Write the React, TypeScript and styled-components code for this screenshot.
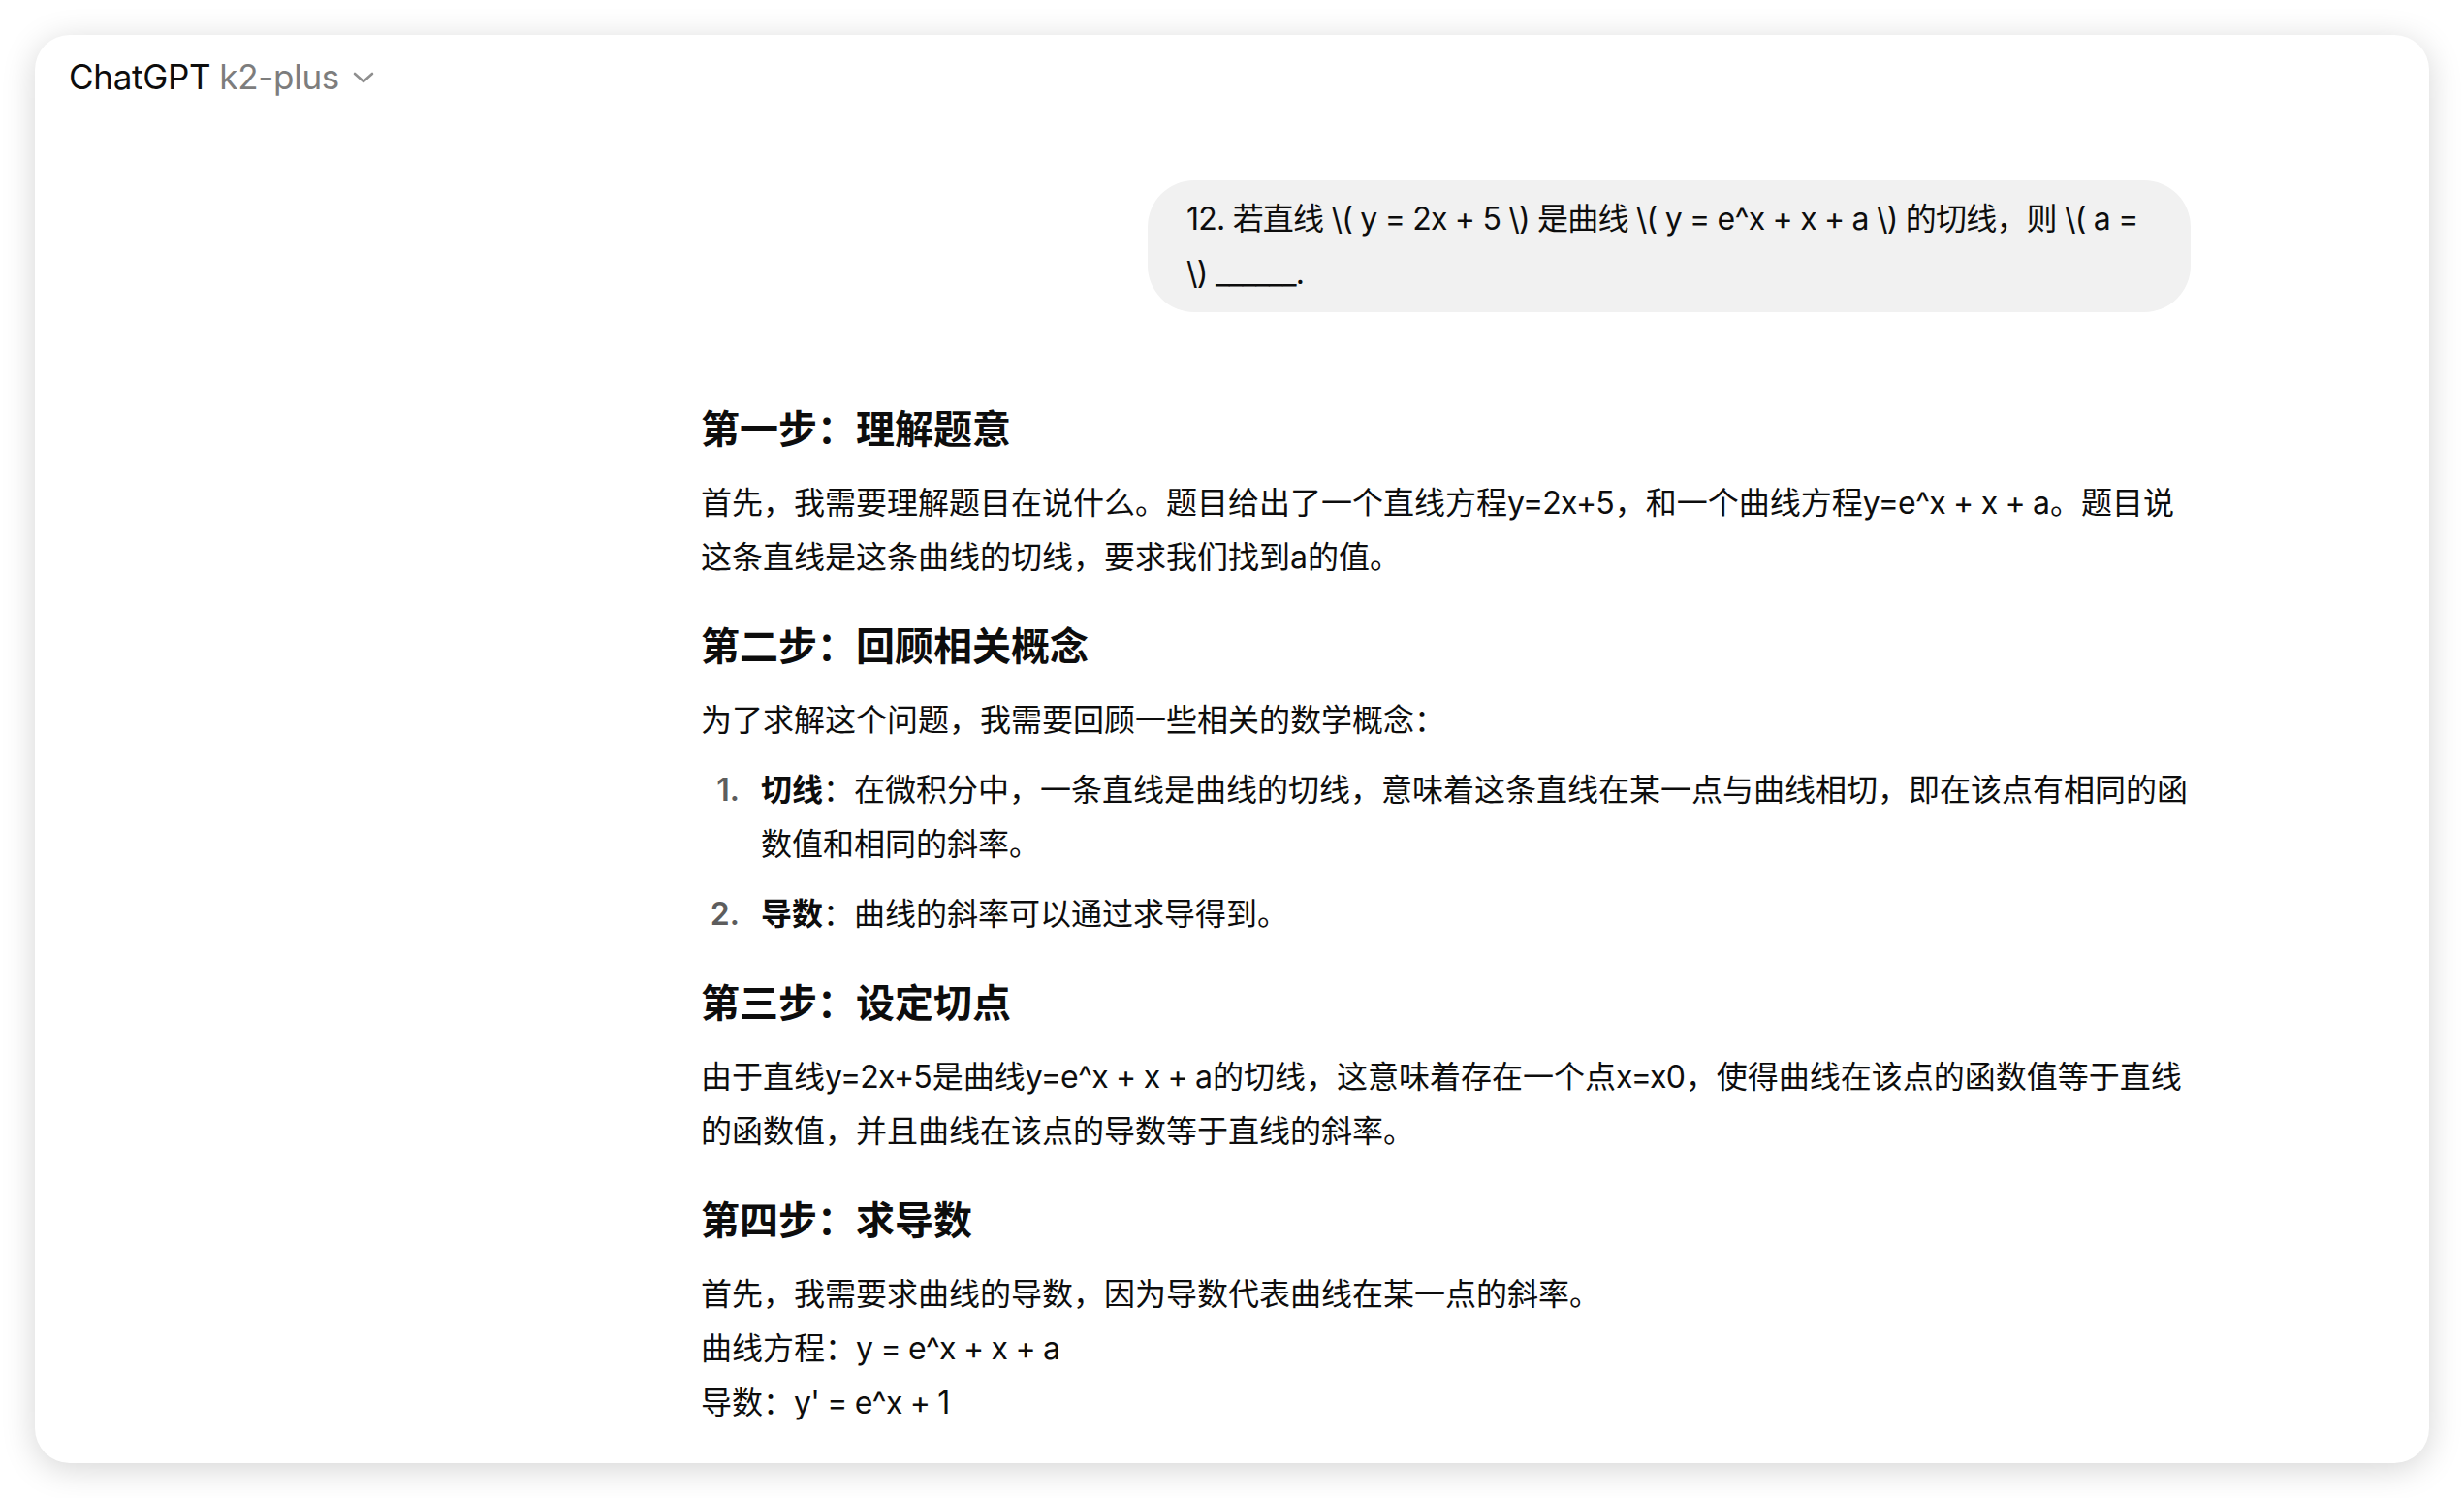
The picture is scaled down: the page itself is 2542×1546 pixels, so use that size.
import React from 'react';
import styled, { createGlobalStyle } from 'styled-components';

const GlobalStyle = createGlobalStyle`
  html, body {
    margin: 0;
    padding: 0;
    background: #ffffff;
  }
  body {
    font-family: "Inter", "Noto Sans CJK SC", sans-serif;
    color: #0d0d0d;
  }
`;

const Window = styled.div`
  margin: 36px;
  height: 1473px;
  border-radius: 36px;
  background: #ffffff;
  box-shadow: 0 6px 34px rgba(0, 0, 0, 0.17);
  overflow: hidden;
  display: flex;
  flex-direction: column;
`;

const Header = styled.header`
  height: 86px;
  padding-left: 35px;
  display: flex;
  align-items: center;
  font-size: 35px;
  line-height: 1;
  letter-spacing: -0.3px;
`;

const Brand = styled.span`
  color: #0d0d0d;
`;

const Model = styled.span`
  color: #7d7d7d;
  margin-left: 9px;
`;

const Chevron = styled.svg`
  width: 24px;
  height: 14px;
  margin-left: 13px;
  margin-top: 2px;
`;

const Thread = styled.main`
  padding: 64px 246px 0 687px;
  display: flex;
  flex-direction: column;
`;

const UserRow = styled.div`
  display: flex;
  justify-content: flex-end;
`;

const Bubble = styled.div`
  max-width: 70%;
  box-sizing: border-box;
  background: #f1f1f1;
  border-radius: 48px;
  padding: 12px 40px;
  font-size: 32px;
  line-height: 56px;
  letter-spacing: -0.8px;
`;

const Answer = styled.article`
  margin-top: 89px;
  font-size: 32px;
  line-height: 56px;
`;

const Heading = styled.h3`
  font-size: 40px;
  line-height: 64px;
  font-weight: 700;
  margin: 32px 0 16px;

  &:first-child {
    margin-top: 0;
  }
`;

const Para = styled.p`
  margin: 0;
`;

/* latin runs (formulas) are set a touch tighter, like the system UI font */
const Expr = styled.span`
  letter-spacing: -0.8px;
  margin-right: 0.8px;
`;

const List = styled.ol`
  list-style: none;
  margin: 16px 0 0;
  padding: 0;
`;

const Item = styled.li`
  display: flex;

  & + & {
    margin-top: 16px;
  }
`;

const Marker = styled.span`
  flex: 0 0 62px;
  box-sizing: border-box;
  padding-right: 22px;
  text-align: right;
  font-weight: 600;
  color: #5d5d5d;
`;

const ItemText = styled.div`
  flex: 1;
  min-width: 0;
`;

const Term = styled.strong`
  font-weight: 700;
`;

const concepts = [
  {
    term: '切线',
    text: '在微积分中，一条直线是曲线的切线，意味着这条直线在某一点与曲线相切，即在该点有相同的函数值和相同的斜率。',
  },
  { term: '导数', text: '曲线的斜率可以通过求导得到。' },
];

const App = () => (
  <>
    <GlobalStyle />
    <Window>
      <Header>
        <Brand>ChatGPT</Brand>
        <Model>k2-plus</Model>
        <Chevron viewBox="0 0 24 14" fill="none">
          <path d="M3 3l9 8 9-8" stroke="#8f8f8f" strokeWidth="2.6" strokeLinecap="round" strokeLinejoin="round" />
        </Chevron>
      </Header>
      <Thread>
        <UserRow>
          <Bubble>
            12. 若直线 \( y = 2x + 5 \) 是曲线 \( y = e^x + x + a \) 的切线，则 \( a = \) ______.
          </Bubble>
        </UserRow>
        <Answer>
          <Heading>第一步：理解题意</Heading>
          <Para>
            首先，我需要理解题目在说什么。题目给出了一个直线方程<Expr>y=2x+5</Expr>，和一个曲线方程
            <Expr>y=e^x + x + a</Expr>。题目说这条直线是这条曲线的切线，要求我们找到<Expr>a</Expr>的值。
          </Para>
          <Heading>第二步：回顾相关概念</Heading>
          <Para>为了求解这个问题，我需要回顾一些相关的数学概念：</Para>
          <List>
            {concepts.map((c, i) => (
              <Item key={c.term}>
                <Marker>{i + 1}.</Marker>
                <ItemText>
                  <Term>{c.term}</Term>：{c.text}
                </ItemText>
              </Item>
            ))}
          </List>
          <Heading>第三步：设定切点</Heading>
          <Para>
            由于直线<Expr>y=2x+5</Expr>是曲线<Expr>y=e^x + x + a</Expr>的切线，这意味着存在一个点
            <Expr>x=x0</Expr>，使得曲线在该点的函数值等于直线的函数值，并且曲线在该点的导数等于直线的斜率。
          </Para>
          <Heading>第四步：求导数</Heading>
          <Para>
            首先，我需要求曲线的导数，因为导数代表曲线在某一点的斜率。
            <br />
            曲线方程：<Expr>y = e^x + x + a</Expr>
            <br />
            导数：<Expr>y' = e^x + 1</Expr>
          </Para>
        </Answer>
      </Thread>
    </Window>
  </>
);

export default App;
